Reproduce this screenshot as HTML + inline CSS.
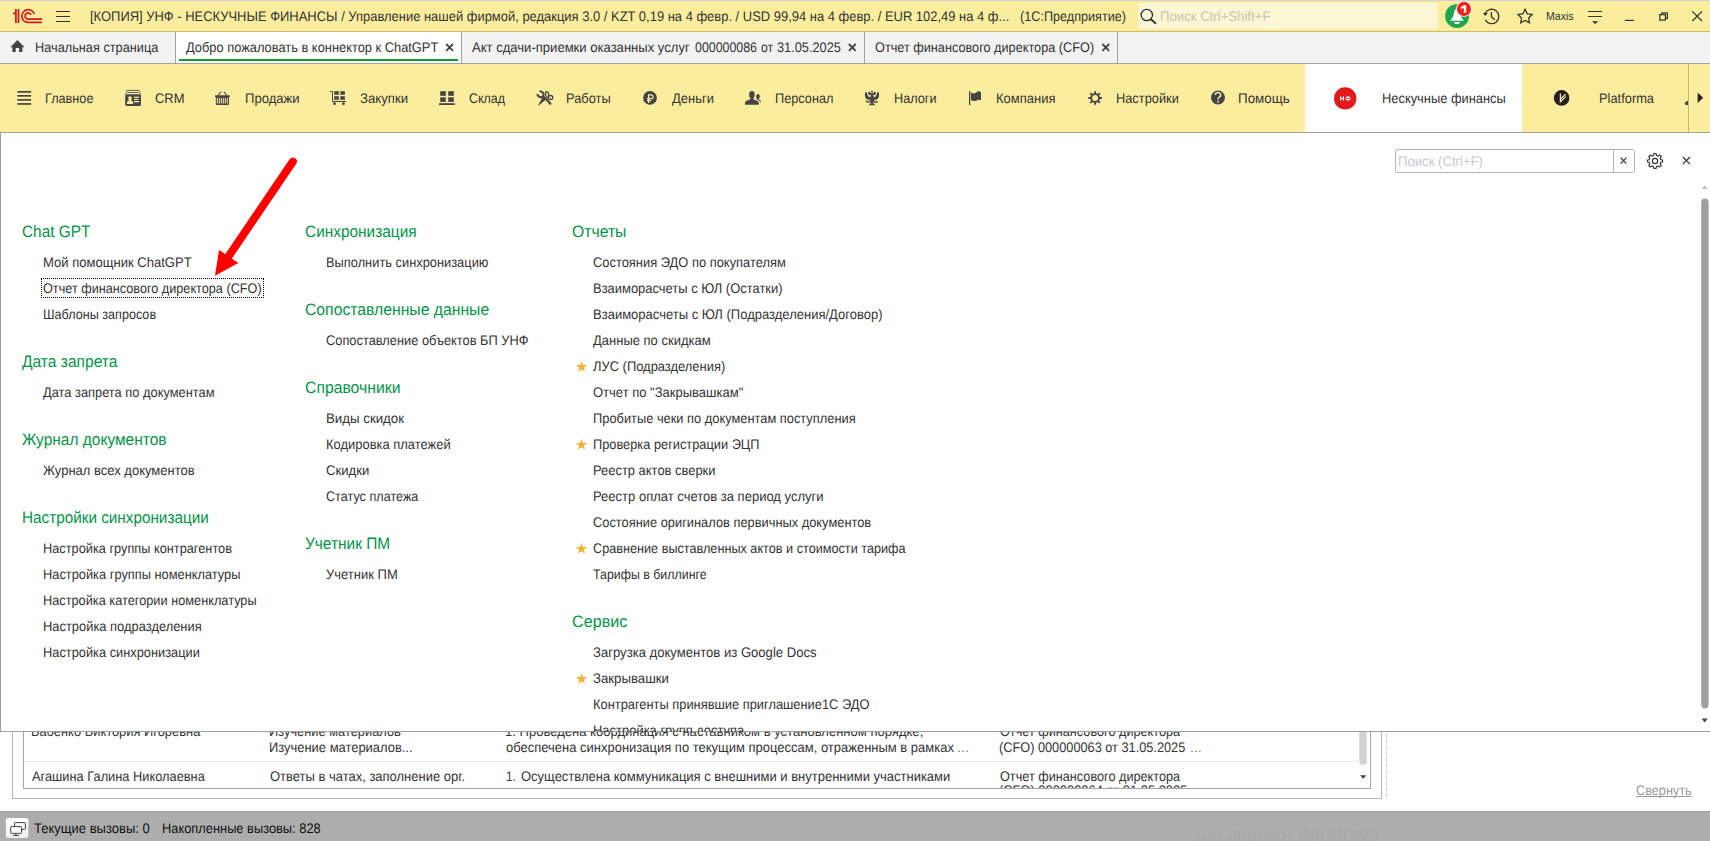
<!DOCTYPE html>
<html lang="ru"><head><meta charset="utf-8"><title>1C</title><style>
html,body{margin:0;padding:0;width:1710px;height:841px;overflow:hidden;}
#root{position:absolute;left:0;top:0;width:1710px;height:841px;overflow:hidden;background:#fff;}
body{width:1710px;height:841px;overflow:hidden;background:#fff;position:relative;font-family:"Liberation Sans", sans-serif;}
.t{position:absolute;white-space:nowrap;line-height:20px;transform-origin:0 0;text-rendering:geometricPrecision;}
.abs{position:absolute;}
svg{position:absolute;left:0;top:0;overflow:visible;}
</style></head>
<body>
<div id="root">

<svg width="1710" height="841" viewBox="0 0 1710 841">
<!-- title bar -->
<rect x="0" y="0" width="1710" height="32" fill="#fbed9e"/>
<rect x="0" y="0" width="1710" height="1" fill="#cfcfd6"/>
<rect x="0" y="31" width="1710" height="1" fill="#cbbc6a"/>
<!-- 1C logo -->
<g fill="none" stroke="#d8161c" stroke-width="1.75">
<path d="M13 13.3 L15.9 13.3 M15.9 9 L15.9 23 M18.5 9 L18.5 23"/>
<path d="M34.3 14.0 A6.35 6.35 0 1 0 28.3 22.45 L42 22.45"/>
<path d="M31.0 14.9 A3.05 3.05 0 1 0 28.0 19.05 L42 19.05"/>
</g>
<path d="M56 11.5H70M56 16.5H70M56 21.5H70" stroke="#333" stroke-width="1.2"/>
<!-- search box -->
<rect x="1138" y="3" width="300" height="26" rx="3" fill="#fdf6d4"/>
<circle cx="1146.8" cy="15" r="5.7" fill="none" stroke="#333" stroke-width="1.3"/>
<path d="M1150.9 19.2 L1155.4 23.2" stroke="#333" stroke-width="1.9" stroke-linecap="round"/>
<!-- bell -->
<circle cx="1457.1" cy="16" r="12" fill="#1ea651"/>
<path d="M1457 8.6 C1455.2 8.6 1454.4 10.8 1453.8 13.8 C1453.2 17.2 1451.6 19.4 1450 20.8 L1464 20.8 C1462.4 19.4 1460.8 17.2 1460.2 13.8 C1459.6 10.8 1458.8 8.6 1457 8.6 Z" fill="#fff"/>
<path d="M1454.1 22.1 L1459.8 22.1 A2.85 2 0 0 1 1454.1 22.1 Z" fill="#fff"/>
<circle cx="1464" cy="8.9" r="7.9" fill="#fff"/>
<circle cx="1464" cy="8.9" r="7.05" fill="#f2211f"/>
<path d="M1460.8 7 L1464 5.2 L1466.2 5.2 L1466.2 12.8 L1463.8 12.8 L1463.8 7.7 L1460.8 9 Z" fill="#fff"/>
<!-- history -->
<g fill="none" stroke="#333" stroke-width="1.3">
<path d="M1485.2 13.2 A7.2 7.2 0 1 1 1485.3 19.9"/>
<path d="M1491.4 12 L1491.4 16.6 L1494.7 19.7"/>
</g>
<path d="M1482.9 12.9 L1487.8 12.9 L1485.3 16.1 Z" fill="#333"/>
<!-- star -->
<path d="M1525.10 9.30 L1527.27 13.81 L1532.23 14.48 L1528.62 17.94 L1529.51 22.87 L1525.10 20.50 L1520.69 22.87 L1521.58 17.94 L1517.97 14.48 L1522.93 13.81 Z" fill="none" stroke="#333" stroke-width="1.25" stroke-linejoin="miter"/>
<!-- filter menu -->
<path d="M1588 11.5H1602M1588 16.5H1602" stroke="#333" stroke-width="1.2"/>
<path d="M1592 21.2 L1598.4 21.2 L1595.2 24 Z" fill="#333"/>
<!-- min / restore / close -->
<path d="M1625 20.4H1634" stroke="#333" stroke-width="1.2"/>
<path d="M1659.8 14.6H1665.4V20.2H1659.8Z M1661.8 14.4V12.8H1667.4V18.4H1665.6" fill="none" stroke="#333" stroke-width="1.2"/>
<path d="M1692.3 11.3L1702 21M1702 11.3L1692.3 21" stroke="#333" stroke-width="1.2"/>

<!-- tab bar -->
<rect x="0" y="32" width="1710" height="31" fill="#f2f2f2"/>
<rect x="176" y="32" width="285" height="31" fill="#fff"/>
<rect x="0" y="63" width="1710" height="1" fill="#a3a3a3"/>
<rect x="175" y="32" width="1" height="31" fill="#a3a3a3"/>
<rect x="461" y="32" width="1" height="31" fill="#a3a3a3"/>
<rect x="864" y="32" width="1" height="31" fill="#a3a3a3"/>
<rect x="1117" y="32" width="1" height="31" fill="#a3a3a3"/>
<rect x="179" y="59" width="279" height="2" fill="#0f9a3a"/>
<path d="M10.3 47.2 L17.4 40.1 L24.5 47.2 L22.4 47.2 L22.4 52.1 L19.1 52.1 L19.1 47.9 L15.7 47.9 L15.7 52.1 L12.4 52.1 L12.4 47.2 Z" fill="#444"/>
<g stroke="#444" stroke-width="1.8">
<path d="M446.2 44L453 50.8M453 44L446.2 50.8"/>
<path d="M848.9 44L855.7 50.8M855.7 44L848.9 50.8"/>
<path d="M1102.4 44L1109.2 50.8M1109.2 44L1102.4 50.8"/>
</g>

<!-- sections panel -->
<rect x="0" y="64" width="1710" height="68" fill="#fbed9e"/>
<rect x="1305" y="64" width="217" height="68" fill="#fff"/>
<rect x="1688" y="64" width="1" height="68" fill="#c4b87a"/>
<path d="M1697.6 92.6 L1703.2 97.8 L1697.6 103 Z" fill="#222"/>
<path d="M1684.9 103.2 A3 3 0 0 1 1688 100.9 L1688 104.9 L1685.6 104.9 Z" fill="#454545"/>
<g fill="#454545">
<!-- Главное -->
<rect x="17.3" y="91" width="13.8" height="1.7"/><rect x="17.3" y="95" width="13.8" height="1.7"/><rect x="17.3" y="99" width="13.8" height="1.7"/><rect x="17.3" y="103.1" width="13.8" height="1.7"/>
<!-- CRM -->
<rect x="126.6" y="90.4" width="13" height="2.1" rx="1" fill="none" stroke="#454545" stroke-width=".85"/>
<rect x="125.1" y="92.9" width="1.1" height="1.2" rx=".4"/><rect x="140" y="92.9" width="1.1" height="1.2" rx=".4"/>
<path d="M126.6 94.3 h13 a1.4 1.4 0 0 1 1.4 1.4 v8.9 a1.4 1.4 0 0 1 -1.4 1.4 h-13 a1.4 1.4 0 0 1 -1.4 -1.4 v-8.9 a1.4 1.4 0 0 1 1.4 -1.4 z
 M130 96 a1.8 2.1 0 0 0 -1.3 3.5 l0 1 c-0.7 .5 -1.8 1 -1.8 2.2 v1.4 h6.2 v-1.4 c0 -1.2 -1.1 -1.7 -1.8 -2.2 l0 -1 a1.8 2.1 0 0 0 -1.3 -3.5 z
 M134 96.8 v1.2 h5.2 v-1.2 z M134 98.9 v1.2 h4.2 v-1.2 z M134 101 v1.2 h5.2 v-1.2 z" fill-rule="evenodd"/>
<!-- Продажи basket -->
<path d="M215 95.3 h14.8 v1.7 h-0.8 v7 a1 1 0 0 1 -1 1 h-11.2 a1 1 0 0 1 -1 -1 v-7 h-0.8 z
 M216.8 98 v5.6 h1 v-5.6 z M218.8 98 v5.6 h1 v-5.6 z M220.8 98 v5.6 h1 v-5.6 z M222.8 98 v5.6 h1 v-5.6 z M224.8 98 v5.6 h1 v-5.6 z M226.8 98 v5.6 h1 v-5.6 z" fill-rule="evenodd"/>
<path d="M218.3 95 L220.7 92.2 M226.5 95 L224.1 92.2" stroke="#454545" stroke-width="1.1" stroke-linecap="round" fill="none"/>
<!-- Закупки cart -->
<rect x="334.2" y="91.2" width="4.6" height="3.6"/><rect x="340.3" y="91.2" width="4.6" height="3.6"/>
<rect x="334.2" y="96.2" width="4.6" height="3.6"/><rect x="340.3" y="96.2" width="4.6" height="3.6"/>
<path d="M330.2 91.5 H332.5 V101.5 H345.8" stroke="#454545" stroke-width="1" fill="none" stroke-linecap="round"/>
<circle cx="334.5" cy="103.7" r="1.4"/><circle cx="343.5" cy="103.7" r="1.4"/>
<!-- Склад -->
<rect x="440.2" y="91.2" width="5.6" height="4.6"/><rect x="448.2" y="91.2" width="5.6" height="4.6"/>
<rect x="440.2" y="97.3" width="5.6" height="4.6"/><rect x="448.2" y="97.3" width="5.6" height="4.6"/>
<rect x="439" y="103.2" width="15.8" height="1.8"/>
<!-- Работы tools -->
<path d="M540.3 91.3 C543.4 91.9 544.3 94.4 543.2 96.3 C541.6 98 538.8 97.5 537.4 94.8" stroke="#454545" stroke-width="2" fill="none" stroke-linecap="round"/>
<path d="M543.6 95.6 L547.2 98.6 L538.6 105.6 L538.1 105.2 Z"/>
<ellipse cx="547.2" cy="94.6" rx="1.5" ry="3" transform="rotate(-12 547.2 94.6)" fill="none" stroke="#454545" stroke-width="1.3"/>
<ellipse cx="550.5" cy="97.5" rx="2.3" ry="2" fill="none" stroke="#454545" stroke-width="1.3"/>
<path d="M546.6 99.8 L550.4 103.8" stroke="#454545" stroke-width="2.2" stroke-linecap="round"/>
<!-- Деньги -->
<circle cx="650" cy="97.9" r="6.9"/>
<!-- Персонал -->
<path d="M751.9 91 c2 0 2.8 1.6 2.8 3.4 c0 1.4 -0.5 2.8 -1.3 3.6 l0 1.2 c1.4 .7 5.4 1.5 5.4 3.8 v1.2 a.6 .6 0 0 1 -.6 .6 h-12.6 a.6 .6 0 0 1 -.6 -.6 v-1.2 c0 -2.3 4 -3.1 5.4 -3.8 l0 -1.2 c-.8 -.8 -1.3 -2.2 -1.3 -3.6 c0 -1.8 .8 -3.4 2.8 -3.4 z"/>
<path d="M758 94 c1.3 0 1.8 1.1 1.8 2.3 c0 1 -.4 2 -.9 2.5 l0 .7 c.8 .4 2 1 2 2.5 l-.5 .4 c-.3 -1.2 -1.6 -2.1 -3.6 -2.8 l0 -.8 c-.5 -.5 -.6 -1.5 -.6 -2.5 c0 -1.2 .5 -2.3 1.8 -2.3 z"/>
<!-- Компания flag -->
<rect x="969" y="91.2" width="1.3" height="13.8"/>
<path d="M971 92.2 C973.3 94.3 975.5 93.3 977.3 91.8 C978.6 90.9 980.2 91.5 981 92.6 V100.6 C979.6 99.3 978.2 99.6 976.8 100.4 C975 101.4 973 101.4 971 100 Z"/>
<!-- Помощь -->
<circle cx="1218" cy="97.6" r="7"/>
</g>
<!-- Деньги ruble sign -->
<path d="M648.6 94.2 V103 M648.6 94.8 H651.2 A1.9 1.9 0 0 1 651.2 98.6 H647 M647 100.6 H651.2" stroke="#fbed9e" stroke-width="1.25" fill="none"/>
<!-- Помощь ? -->
<path d="M1215.4 95 A2.6 2.4 0 1 1 1219.3 97 C1218.2 97.8 1218 98.4 1218 99.8" stroke="#f3e9b0" stroke-width="1.5" fill="none"/>
<rect x="1217.2" y="101" width="1.6" height="1.6" fill="#f3e9b0"/>
<!-- Настройки gear -->
<g stroke="#454545" fill="none">
<circle cx="1095.1" cy="98" r="3.9" stroke-width="1.9"/>
<path d="M1095.1 91.2V94M1095.1 102V104.8M1088.3 98H1091.1M1099.1 98H1101.9M1090.3 93.2L1092.3 95.2M1097.9 100.8L1099.9 102.8M1090.3 102.8L1092.3 100.8M1097.9 95.2L1099.9 93.2" stroke-width="1.9"/>
</g>
<!-- Налоги eagle (approx) -->
<g fill="#454545" transform="translate(857 84) scale(0.03333)">
<path d="M450 200 L478 212 L482 250 L418 250 L422 212 Z"/>
<path d="M500 250 L528 222 L556 250 L566 300 L500 300 Z"/><path d="M400 250 L372 222 L344 250 L334 300 L400 300 Z"/>
<rect x="338" y="272" width="224" height="52"/>
<path d="M412 315 L488 315 L502 400 L524 470 L494 560 L450 605 L406 560 L376 470 L398 400 Z"/>
<path d="M498 405 L545 385 L588 330 L606 250 L640 236 L664 300 L658 382 L622 442 L578 474 L518 474 Z"/>
<path d="M402 405 L355 385 L312 330 L294 250 L260 236 L236 300 L242 382 L278 442 L322 474 L382 474 Z"/>
<path d="M498 498 L560 522 L600 508 L628 520 L604 560 L560 568 L508 542 Z"/>
<path d="M402 498 L344 524 L300 500 L248 482 L268 522 L330 568 L392 542 Z"/>
<path d="M385 588 L515 588 L542 634 L358 634 Z"/>
</g>
<!-- НФ -->
<circle cx="1345.2" cy="98.4" r="11.2" fill="#e41a1a"/>
<g fill="#fff"><rect x="1340.1" y="96.3" width="1.15" height="4.4"/><rect x="1342.85" y="96.3" width="1.15" height="4.4"/><rect x="1340.1" y="97.95" width="3.9" height="1.05"/><rect x="1347.45" y="96.1" width="1.1" height="4.8"/></g>
<ellipse cx="1348" cy="98.45" rx="2.45" ry="1.45" fill="none" stroke="#fff" stroke-width="1"/>
<!-- Platforma -->
<circle cx="1561.6" cy="97.9" r="7.8" fill="#231f20"/>
<path d="M1560.4 93.6 V101.8 L1565.8 96.6 M1560.6 99 L1565.6 94.2" stroke="#efe4a6" stroke-width="1.25" fill="none"/>

<!-- background content -->
<rect x="12" y="132" width="1369" height="666" fill="none" stroke="#b6b6b6" stroke-width="1" transform="translate(.5 .5)"/>
<rect x="23" y="132" width="1347" height="656" fill="none" stroke="#a6a6a6" stroke-width="1" transform="translate(.5 .5)"/>
<rect x="24" y="761" width="1332" height="1" fill="#e4e4e4"/>
<rect x="1359.3" y="700" width="7.4" height="65" rx="3.7" fill="#d3d3d3"/>
<path d="M1360 775.2 H1366.4 L1363.2 778.8 Z" fill="#444"/>
<path d="M1386.5 733.5 V797" stroke="#cdcdcd" stroke-width="1" stroke-dasharray="4 2"/>
<!-- status bar -->
<rect x="0" y="811" width="1710" height="30" fill="#adadad"/>
<rect x="0" y="811" width="1710" height="1" fill="#9f9f9f"/><rect x="0" y="812" width="1710" height="1" fill="#a8a8a8"/>
<defs><linearGradient id="sbg" x1="0" y1="0" x2="0" y2="1"><stop offset="0" stop-color="#ffffff"/><stop offset="1" stop-color="#ededed"/></linearGradient></defs>
<rect x="5.8" y="818" width="22.6" height="20" rx="2.5" fill="url(#sbg)"/>
<g stroke="#444" stroke-width="1">
<rect x="14.6" y="822.6" width="10.8" height="6.8" rx=".6" fill="#f8f8f8"/>
<rect x="10.7" y="826.6" width="10.8" height="6.8" rx=".6" fill="#fbfbfb"/>
<path d="M15.9 833.6 V835.4 M13.2 835.5 H18.9" fill="none"/>
</g>
</svg>
<div class="abs" style="left:24px;top:132px;width:1334px;height:656px;overflow:hidden;"><div class="abs" style="left:-24px;top:-132px;width:1710px;height:841px;"><span class='t' style='left:31.35px;top:721.07px;font-size:13.9px;color:#333;transform:scaleX(0.9271);'>Бабенко Виктория Игоревна</span><span class='t' style='left:269.35px;top:721.07px;font-size:13.9px;color:#333;transform:scaleX(0.9253);'>Изучение материалов</span><span class='t' style='left:269.34px;top:737.07px;font-size:13.9px;color:#333;transform:scaleX(0.9310);'>Изучение материалов...</span><span class='t' style='left:505.37px;top:721.07px;font-size:13.9px;color:#333;transform:scaleX(0.9394);'>1. Проведена координация с наставником в установленном порядке,</span><span class='t' style='left:506.25px;top:737.07px;font-size:13.9px;color:#333;transform:scaleX(0.9350);'>обеспечена синхронизация по текущим процессам, отраженным в рамках</span><span class='t' style='left:957.47px;top:737.07px;font-size:13.9px;color:#8c8c8c;transform:scaleX(1.0509);'>...</span><span class='t' style='left:999.80px;top:721.07px;font-size:13.9px;color:#333;transform:scaleX(0.9134);'>Отчет финансового директора</span><span class='t' style='left:999.41px;top:737.07px;font-size:13.9px;color:#333;transform:scaleX(0.9176);'>(CFO) 000000063 от 31.05.2025</span><span class='t' style='left:1190.13px;top:737.07px;font-size:13.9px;color:#8c8c8c;transform:scaleX(1.0075);'>...</span><span class='t' style='left:32.17px;top:766.07px;font-size:13.9px;color:#333;transform:scaleX(0.9228);'>Агашина Галина Николаевна</span><span class='t' style='left:269.78px;top:766.07px;font-size:13.9px;color:#333;transform:scaleX(0.9346);'>Ответы в чатах, заполнение орг.</span><span class='t' style='left:506.08px;top:766.07px;font-size:13.9px;color:#333;transform:scaleX(0.8408);'>1.</span><span class='t' style='left:520.78px;top:766.07px;font-size:13.9px;color:#333;transform:scaleX(0.9352);'>Осуществлена коммуникация с внешними и внутренними участниками</span><span class='t' style='left:999.80px;top:766.07px;font-size:13.9px;color:#333;transform:scaleX(0.9134);'>Отчет финансового директора</span><span class='t' style='left:999.40px;top:780.07px;font-size:13.9px;color:#333;transform:scaleX(0.9278);'>(CFO) 000000064 от 31.05.2025 ...</span></div></div>

<div class="abs" style="left:0;top:132px;width:1710px;height:600px;overflow:hidden;"><div class="abs" style="left:0;top:-132px;width:1710px;height:841px;">

<svg width="1710" height="841" viewBox="0 0 1710 841">
<rect x="0" y="132" width="1710" height="600" fill="#fff"/>
<rect x="0" y="132" width="1710" height="1" fill="#a0a0a0"/>
<rect x="0" y="731" width="1710" height="1" fill="#a0a0a0"/>
<rect x="0" y="132" width="1" height="600" fill="#999"/>
<!-- search -->
<rect x="1395.5" y="149.5" width="239" height="23" rx="2" fill="#fff" stroke="#b4b4b4"/>
<path d="M1613.5 150 V172" stroke="#b4b4b4"/>
<path d="M1620.6 157.8 L1626.4 163.6 M1626.4 157.8 L1620.6 163.6" stroke="#444" stroke-width="1.3"/>
<!-- gear outline -->
<g transform="translate(1655 161) scale(0.92)" fill="none" stroke="#333" stroke-width="1.25" stroke-linejoin="round">
<path d="M-1.3 -8 H1.3 L1.8 -5.9 L3.2 -5.3 L5 -6.5 L6.8 -4.7 L5.6 -2.9 L6.2 -1.5 L8.2 -1.1 V1.1 L6.2 1.5 L5.6 2.9 L6.8 4.7 L5 6.5 L3.2 5.3 L1.8 5.9 L1.3 8 H-1.3 L-1.8 5.9 L-3.2 5.3 L-5 6.5 L-6.8 4.7 L-5.6 2.9 L-6.2 1.5 L-8.2 1.1 V-1.1 L-6.2 -1.5 L-5.6 -2.9 L-6.8 -4.7 L-5 -6.5 L-3.2 -5.3 L-1.8 -5.9 Z"/>
<circle cx="0" cy="0" r="2.9"/>
</g>
<path d="M1682.8 157 L1690 164.2 M1690 157 L1682.8 164.2" stroke="#333" stroke-width="1.2"/>
<!-- scrollbar -->
<path d="M1701.8 189 L1704.7 185.2 L1707.6 189 Z" fill="#c2c2c2"/>
<rect x="1701.2" y="198.5" width="7.4" height="510" rx="3.7" fill="#a0a0a0"/>
<path d="M1701.6 718.4 H1707.8 L1704.7 722.6 Z" fill="#444"/>
<!-- red arrow -->
<path d="M292.9 161.6 L229.5 255" stroke="#ff0000" stroke-width="8" stroke-linecap="round"/>
<path d="M215 275.7 L219.1 249.9 L238.3 262.9 Z" fill="#ff0000"/>
<!-- focus rect -->

<polygon points="581.50,361.00 582.94,364.92 587.11,365.08 583.83,367.66 584.97,371.67 581.50,369.35 578.03,371.67 579.17,367.66 575.89,365.08 580.06,364.92" fill="#f6b13a"/><polygon points="581.50,439.00 582.94,442.92 587.11,443.08 583.83,445.66 584.97,449.67 581.50,447.35 578.03,449.67 579.17,445.66 575.89,443.08 580.06,442.92" fill="#f6b13a"/><polygon points="581.50,543.00 582.94,546.92 587.11,547.08 583.83,549.66 584.97,553.67 581.50,551.35 578.03,553.67 579.17,549.66 575.89,547.08 580.06,546.92" fill="#f6b13a"/><polygon points="581.50,673.00 582.94,676.92 587.11,677.08 583.83,679.66 584.97,683.67 581.50,681.35 578.03,683.67 579.17,679.66 575.89,677.08 580.06,676.92" fill="#f6b13a"/>
</svg>
<span class='t' style='left:1397.82px;top:151.07px;font-size:13.9px;color:#c8c8cc;transform:scaleX(0.9465);'>Поиск (Ctrl+F)</span><span class='t' style='left:22.27px;top:221.62px;font-size:16.59px;color:#009646;transform:scaleX(0.9281);'>Chat GPT</span><span class='t' style='left:42.81px;top:252.07px;font-size:13.9px;color:#333;transform:scaleX(0.9392);'>Мой помощник ChatGPT</span><span class='t' style='left:43.30px;top:278.07px;font-size:13.9px;color:#333;transform:scaleX(0.9123);'>Отчет финансового директора (CFO)</span><span class='t' style='left:42.87px;top:304.07px;font-size:13.9px;color:#333;transform:scaleX(0.9078);'>Шаблоны запросов</span><span class='t' style='left:22.37px;top:351.62px;font-size:16.59px;color:#009646;transform:scaleX(0.9390);'>Дата запрета</span><span class='t' style='left:43.38px;top:382.07px;font-size:13.9px;color:#333;transform:scaleX(0.9248);'>Дата запрета по документам</span><span class='t' style='left:21.88px;top:429.62px;font-size:16.59px;color:#009646;transform:scaleX(0.9339);'>Журнал документов</span><span class='t' style='left:43.15px;top:460.07px;font-size:13.9px;color:#333;transform:scaleX(0.9355);'>Журнал всех документов</span><span class='t' style='left:21.96px;top:507.62px;font-size:16.59px;color:#009646;transform:scaleX(0.9218);'>Настройки синхронизации</span><span class='t' style='left:42.83px;top:538.07px;font-size:13.9px;color:#333;transform:scaleX(0.9190);'>Настройка группы контрагентов</span><span class='t' style='left:42.83px;top:564.07px;font-size:13.9px;color:#333;transform:scaleX(0.9235);'>Настройка группы номенклатуры</span><span class='t' style='left:42.83px;top:590.07px;font-size:13.9px;color:#333;transform:scaleX(0.9181);'>Настройка категории номенклатуры</span><span class='t' style='left:42.82px;top:616.07px;font-size:13.9px;color:#333;transform:scaleX(0.9291);'>Настройка подразделения</span><span class='t' style='left:42.83px;top:642.07px;font-size:13.9px;color:#333;transform:scaleX(0.9223);'>Настройка синхронизации</span><span class='t' style='left:305.17px;top:221.62px;font-size:16.59px;color:#009646;transform:scaleX(0.9294);'>Синхронизация</span><span class='t' style='left:325.85px;top:252.07px;font-size:13.9px;color:#333;transform:scaleX(0.9250);'>Выполнить синхронизацию</span><span class='t' style='left:305.15px;top:299.62px;font-size:16.59px;color:#009646;transform:scaleX(0.9492);'>Сопоставленные данные</span><span class='t' style='left:326.25px;top:330.07px;font-size:13.9px;color:#333;transform:scaleX(0.9239);'>Сопоставление объектов БП УНФ</span><span class='t' style='left:305.15px;top:377.62px;font-size:16.59px;color:#009646;transform:scaleX(0.9503);'>Справочники</span><span class='t' style='left:325.82px;top:408.07px;font-size:13.9px;color:#333;transform:scaleX(0.9557);'>Виды скидок</span><span class='t' style='left:325.82px;top:434.07px;font-size:13.9px;color:#333;transform:scaleX(0.9321);'>Кодировка платежей</span><span class='t' style='left:326.23px;top:460.07px;font-size:13.9px;color:#333;transform:scaleX(0.9458);'>Скидки</span><span class='t' style='left:326.26px;top:486.07px;font-size:13.9px;color:#333;transform:scaleX(0.9093);'>Статус платежа</span><span class='t' style='left:304.89px;top:533.62px;font-size:16.59px;color:#009646;transform:scaleX(0.9312);'>Учетник ПМ</span><span class='t' style='left:325.96px;top:564.07px;font-size:13.9px;color:#333;transform:scaleX(0.9360);'>Учетник ПМ</span><span class='t' style='left:572.15px;top:221.62px;font-size:16.59px;color:#009646;transform:scaleX(0.9494);'>Отчеты</span><span class='t' style='left:593.05px;top:252.07px;font-size:13.9px;color:#333;transform:scaleX(0.9286);'>Состояния ЭДО по покупателям</span><span class='t' style='left:592.64px;top:278.07px;font-size:13.9px;color:#333;transform:scaleX(0.9320);'>Взаиморасчеты с ЮЛ (Остатки)</span><span class='t' style='left:592.64px;top:304.07px;font-size:13.9px;color:#333;transform:scaleX(0.9367);'>Взаиморасчеты с ЮЛ (Подразделения/Договор)</span><span class='t' style='left:593.18px;top:330.07px;font-size:13.9px;color:#333;transform:scaleX(0.9359);'>Данные по скидкам</span><span class='t' style='left:593.17px;top:356.07px;font-size:13.9px;color:#333;transform:scaleX(0.9302);'>ЛУС (Подразделения)</span><span class='t' style='left:593.08px;top:382.07px;font-size:13.9px;color:#333;transform:scaleX(0.9361);'>Отчет по &quot;Закрывашкам&quot;</span><span class='t' style='left:592.65px;top:408.07px;font-size:13.9px;color:#333;transform:scaleX(0.9249);'>Пробитые чеки по документам поступления</span><span class='t' style='left:592.65px;top:434.07px;font-size:13.9px;color:#333;transform:scaleX(0.9215);'>Проверка регистрации ЭЦП</span><span class='t' style='left:592.64px;top:460.07px;font-size:13.9px;color:#333;transform:scaleX(0.9310);'>Реестр актов сверки</span><span class='t' style='left:592.63px;top:486.07px;font-size:13.9px;color:#333;transform:scaleX(0.9366);'>Реестр оплат счетов за период услуги</span><span class='t' style='left:593.05px;top:512.07px;font-size:13.9px;color:#333;transform:scaleX(0.9250);'>Состояние оригиналов первичных документов</span><span class='t' style='left:593.06px;top:538.07px;font-size:13.9px;color:#333;transform:scaleX(0.9121);'>Сравнение выставленных актов и стоимости тарифа</span><span class='t' style='left:593.11px;top:564.07px;font-size:13.9px;color:#333;transform:scaleX(0.8915);'>Тарифы в биллинге</span><span class='t' style='left:572.13px;top:611.62px;font-size:16.59px;color:#009646;transform:scaleX(0.9745);'>Сервис</span><span class='t' style='left:592.69px;top:642.07px;font-size:13.9px;color:#333;transform:scaleX(0.9420);'>Загрузка документов из Google Docs</span><span class='t' style='left:592.68px;top:668.07px;font-size:13.9px;color:#333;transform:scaleX(0.9508);'>Закрывашки</span><span class='t' style='left:592.63px;top:694.07px;font-size:13.9px;color:#333;transform:scaleX(0.9256);'>Контрагенты принявшие приглашение1С ЭДО</span><span class='t' style='left:592.62px;top:720.07px;font-size:13.9px;color:#333;transform:scaleX(0.9329);'>Настройка групп доступа</span>
<div class="abs" style="left:41px;top:278px;width:221px;height:18px;border:1px dotted #000;"></div>
</div></div>
<span class='t' style='left:90.45px;top:6.07px;font-size:13.9px;color:#333;transform:scaleX(0.9327);'>[КОПИЯ] УНФ - НЕСКУЧНЫЕ ФИНАНСЫ / Управление нашей фирмой, редакция 3.0 / KZT 0,19 на 4 февр. / USD 99,94 на 4 февр. / EUR 102,49 на 4 ф...</span><span class='t' style='left:1020.42px;top:6.07px;font-size:13.9px;color:#333;transform:scaleX(0.9104);'>(1С:Предприятие)</span><span class='t' style='left:1159.82px;top:6.07px;font-size:13.9px;color:#c8c5b3;transform:scaleX(0.9482);'>Поиск Ctrl+Shift+F</span><span class='t' style='left:1545.97px;top:7.12px;font-size:11.55px;color:#333;transform:scaleX(0.9146);'>Maxis</span><span class='t' style='left:35.34px;top:37.07px;font-size:13.9px;color:#333;transform:scaleX(0.9174);'>Начальная страница</span><span class='t' style='left:185.88px;top:37.07px;font-size:13.9px;color:#333;transform:scaleX(0.9255);'>Добро пожаловать в коннектор к ChatGPT</span><span class='t' style='left:472.27px;top:37.07px;font-size:13.9px;color:#333;transform:scaleX(0.9401);'>Акт сдачи-приемки оказанных услуг</span><span class='t' style='left:694.80px;top:37.07px;font-size:13.9px;color:#333;transform:scaleX(0.8918);'>000000086</span><span class='t' style='left:760.88px;top:37.07px;font-size:13.9px;color:#333;transform:scaleX(0.8843);'>от</span><span class='t' style='left:776.77px;top:37.07px;font-size:13.9px;color:#333;transform:scaleX(0.9191);'>31.05.2025</span><span class='t' style='left:875.30px;top:37.07px;font-size:13.9px;color:#333;transform:scaleX(0.9144);'>Отчет финансового директора (CFO)</span><span class='t' style='left:45.34px;top:88.07px;font-size:13.9px;color:#333;transform:scaleX(0.9135);'>Главное</span><span class='t' style='left:154.94px;top:88.07px;font-size:13.9px;color:#333;transform:scaleX(0.9342);'>CRM</span><span class='t' style='left:244.53px;top:88.07px;font-size:13.9px;color:#333;transform:scaleX(0.9416);'>Продажи</span><span class='t' style='left:359.68px;top:88.07px;font-size:13.9px;color:#333;transform:scaleX(0.9483);'>Закупки</span><span class='t' style='left:468.97px;top:88.07px;font-size:13.9px;color:#333;transform:scaleX(0.8943);'>Склад</span><span class='t' style='left:566.35px;top:88.07px;font-size:13.9px;color:#333;transform:scaleX(0.9251);'>Работы</span><span class='t' style='left:671.88px;top:88.07px;font-size:13.9px;color:#333;transform:scaleX(0.9389);'>Деньги</span><span class='t' style='left:774.55px;top:88.07px;font-size:13.9px;color:#333;transform:scaleX(0.9175);'>Персонал</span><span class='t' style='left:893.64px;top:88.07px;font-size:13.9px;color:#333;transform:scaleX(0.9142);'>Налоги</span><span class='t' style='left:996.41px;top:88.07px;font-size:13.9px;color:#333;transform:scaleX(0.9359);'>Компания</span><span class='t' style='left:1116.33px;top:88.07px;font-size:13.9px;color:#333;transform:scaleX(0.9219);'>Настройки</span><span class='t' style='left:1238.30px;top:88.07px;font-size:13.9px;color:#333;transform:scaleX(0.9648);'>Помощь</span><span class='t' style='left:1382.32px;top:88.07px;font-size:13.9px;color:#333;transform:scaleX(0.9264);'>Нескучные финансы</span><span class='t' style='left:1598.65px;top:88.07px;font-size:13.9px;color:#333;transform:scaleX(0.9257);'>Platforma</span><span class='t' style='left:1636.06px;top:780.07px;font-size:13.9px;color:#9a9a9a;transform:scaleX(0.9149);text-decoration:underline;text-decoration-skip-ink:none;text-underline-offset:1px;'>Свернуть</span><span class='t' style='left:33.98px;top:818.07px;font-size:13.9px;color:#111;transform:scaleX(0.9373);'>Текущие вызовы: 0</span><span class='t' style='left:161.63px;top:818.07px;font-size:13.9px;color:#111;transform:scaleX(0.9251);'>Накопленные вызовы: 828</span><span class='t' style='left:1194.17px;top:826.00px;font-size:21.0px;color:#a8a8a8;transform:scaleX(0.9518);'>Активация Windows</span>

</div>
</body></html>
